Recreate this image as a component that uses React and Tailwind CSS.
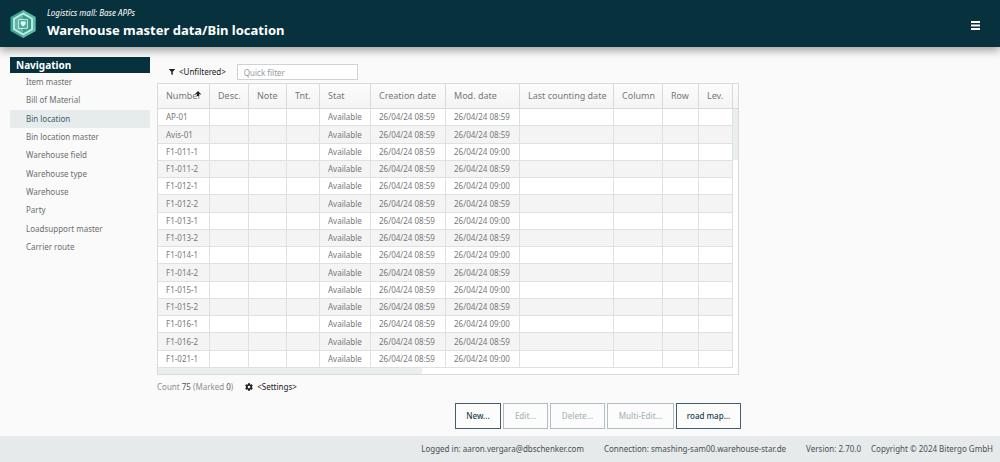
import React, { useState } from "react";
import { FaCog, FaFilter } from "react-icons/fa";

const navItems = [
  "Item master",
  "Bill of Material",
  "Bin location",
  "Bin location master",
  "Warehouse field",
  "Warehouse type",
  "Warehouse",
  "Party",
  "Loadsupport master",
  "Carrier route",
];

const columns = [
  { label: "Number", width: "w-[52px]", sorted: true },
  { label: "Desc.", width: "w-[39px]" },
  { label: "Note", width: "w-[38px]" },
  { label: "Tnt.", width: "w-[33px]" },
  { label: "Stat", width: "w-[51px]" },
  { label: "Creation date", width: "w-[75px]" },
  { label: "Mod. date", width: "w-[74px]" },
  { label: "Last counting date", width: "w-[94px]" },
  { label: "Column", width: "w-[49px]" },
  { label: "Row", width: "w-[36px]" },
  { label: "Lev.", width: "w-[34px]" },
];

const rows = [
  ["AP-01", "08:59"],
  ["Avis-01", "08:59"],
  ["F1-011-1", "09:00"],
  ["F1-011-2", "08:59"],
  ["F1-012-1", "09:00"],
  ["F1-012-2", "08:59"],
  ["F1-013-1", "09:00"],
  ["F1-013-2", "08:59"],
  ["F1-014-1", "09:00"],
  ["F1-014-2", "08:59"],
  ["F1-015-1", "09:00"],
  ["F1-015-2", "08:59"],
  ["F1-016-1", "09:00"],
  ["F1-016-2", "08:59"],
  ["F1-021-1", "09:00"],
];

const actions = [
  { label: "New...", width: "w-[46px]", enabled: true },
  { label: "Edit...", width: "w-[45px]" },
  { label: "Delete...", width: "w-[55px]" },
  { label: "Multi-Edit...", width: "w-[67px]" },
  { label: "road map...", width: "w-[65px]", enabled: true },
];

function Logo() {
  return (
    <svg viewBox="0 0 26 28" className="h-7 w-[26px]" aria-hidden="true">
      <path d="M13 0 25.5 7v14L13 28 .5 21V7z" fill="#3fa796" />
      <path d="M13 0 25.5 7v14L13 28z" fill="#5dbcab" />
      <path d="M13 3.5 22 8.7v10.6l-9 5.2-9-5.2V8.7z" fill="#3a9a8b" stroke="#c6eee3" strokeWidth="1.8" />
      <path d="M4 8.7 13 3.5V24.5L4 19.3z" fill="#b5ebdd" opacity=".35" />
      <path d="M8.5 9.5h9v9h-9z" fill="#4fae9f" stroke="#c4efe5" strokeWidth=".9" />
      <path d="M10.8 11.5h4.8v2.6L13 16.5l-2.2-2.4z" fill="#f2fffb" />
    </svg>
  );
}

function Header() {
  return (
    <header className="z-10 flex h-[47px] shrink-0 items-center bg-[#07323d] pr-5 pl-[10px] text-white shadow-[0_3px_9px_rgba(0,0,0,0.4)]">
      <Logo />
      <div className="ml-[11px] flex-1">
        <p className="text-[8px] leading-[10px] italic">Logistics mall: Base APPs</p>
        <h1 className="pt-[2px] text-[13px] leading-5 font-bold">Warehouse master data/Bin location</h1>
      </div>
      <button type="button" aria-label="Menu" className="mt-1">
        <svg viewBox="0 0 9 9" className="size-[9px]" fill="currentColor">
          <path d="M0 0h9v2H0zM0 3.5h9v2H0zM0 7h9v2H0z" />
        </svg>
      </button>
    </header>
  );
}

function Navigation() {
  return (
    <nav className="mt-[10px] ml-[10px] w-[140px] shrink-0">
      <h2 className="h-4 bg-[#07323d] pl-[6px] text-[10px] leading-4 font-bold text-white">
        Navigation
      </h2>
      <ul className="grid h-[183px] auto-rows-fr text-[8px] text-[#6b6f70]">
        {navItems.map((item) => (
          <li key={item} className="grid">
            <a
              href="#"
              className={
                item === "Bin location"
                  ? "flex items-center bg-[#e6ebeb] pl-4 text-[#3c6068]"
                  : "flex items-center pl-4"
              }
            >
              {item}
            </a>
          </li>
        ))}
      </ul>
    </nav>
  );
}

function BinTable() {
  return (
    <div className="border border-[#d9dbdb] bg-white">
      <table className="w-full table-fixed border-separate border-spacing-0 text-left text-[8px] text-[#767879]">
        <thead>
          <tr className="h-[25px] bg-linear-to-b from-[#fcfcfc] to-[#f4f4f4] text-[9px]">
            {columns.map((col) => (
              <th
                key={col.label}
                className={`${col.width} border-r border-b border-[#d9dbdb] pl-2 font-normal whitespace-nowrap`}
              >
                <span className="relative">
                  {col.label}
                  {col.sorted && (
                    <svg viewBox="0 0 6 5" className="absolute top-0.5 right-0 h-[5px] w-[6px]" fill="#222">
                      <path d="M3 0 6 3H4v2H2V3H0z" />
                    </svg>
                  )}
                </span>
              </th>
            ))}
            <th className="border-b border-[#d9dbdb]" />
          </tr>
        </thead>
        <tbody>
          {rows.map(([number, modified], i) => {
            const cells = [
              number, "", "", "", "Available",
              "26/04/24 08:59", `26/04/24 ${modified}`, "", "", "", "",
            ];
            return (
              <tr key={number} className="h-[17px] even:h-[18px] even:bg-[#f4f4f4] nth-[4n]:h-[17px]">
                {cells.map((cell, c) => (
                  <td
                    key={c}
                    className="border-r border-b border-[#dfe0e0] pl-2 leading-3 whitespace-nowrap"
                  >
                    {cell}
                  </td>
                ))}
                {i === 0 && (
                  <td rowSpan={rows.length} className="bg-white align-top">
                    <div className="h-[51px] bg-[#ebeeee]" />
                  </td>
                )}
              </tr>
            );
          })}
        </tbody>
      </table>
      <div className="h-[6px]">
        <div className="h-full w-[264px] bg-[#ebeeee]" />
      </div>
    </div>
  );
}

export default function App() {
  const [filter, setFilter] = useState("");

  return (
    <div className="flex min-h-screen flex-col bg-[#fafafa] font-['Noto_Sans',sans-serif]">
      <Header />
      <div className="flex flex-1">
        <Navigation />
        <main className="ml-[7px] w-full max-w-[584px] pt-[17px]">
          <div className="flex h-4 items-center pl-3 text-[8px]">
            <button type="button" className="flex items-center gap-1 text-[#222]">
              <FaFilter className="size-[6px]" />
              &lt;Unfiltered&gt;
            </button>
            <input
              type="text"
              aria-label="Quick filter"
              placeholder="Quick filter"
              value={filter}
              onChange={(e) => setFilter(e.target.value)}
              className="ml-[11px] h-4 w-[121px] border border-[#d0d3d3] bg-white px-[6px] placeholder:text-[#999]"
            />
          </div>
          <div className="mt-[3px] pr-[2px]">
            <BinTable />
          </div>
          <div className="mt-[6px] flex h-3 items-center text-[8px] text-[#8d9091]">
            <p>
              Count <span className="text-[#555]">75</span> (Marked{" "}
              <span className="text-[#555]">0</span>)
            </p>
            <button type="button" className="ml-3 flex items-center gap-1 text-[#222]">
              <FaCog className="size-[8px]" />
              &lt;Settings&gt;
            </button>
          </div>
          <div className="mt-[10px] flex justify-end gap-[2px] pb-[7px] text-[8px]">
            {actions.map(({ label, width, enabled }) => (
              <button
                key={label}
                type="button"
                disabled={!enabled}
                className={`${width} h-[26px] border border-[#41606a] bg-[#fcfcfc] font-medium whitespace-nowrap text-[#17424d] disabled:border-[#b2bfc3] disabled:text-[#a9b7bb]`}
              >
                {label}
              </button>
            ))}
          </div>
        </main>
      </div>
      <footer className="flex h-[26px] shrink-0 items-center justify-end bg-[#e6eaeb] pr-[7px] text-[8px] whitespace-nowrap text-[#4a5052]">
        <span className="mr-5">Logged in: aaron.vergara@dbschenker.com</span>
        <span className="mr-5">Connection: smashing-sam00.warehouse-star.de</span>
        <span className="mr-[10px]">Version: 2.70.0</span>
        <span>Copyright © 2024 Bitergo GmbH</span>
      </footer>
    </div>
  );
}
